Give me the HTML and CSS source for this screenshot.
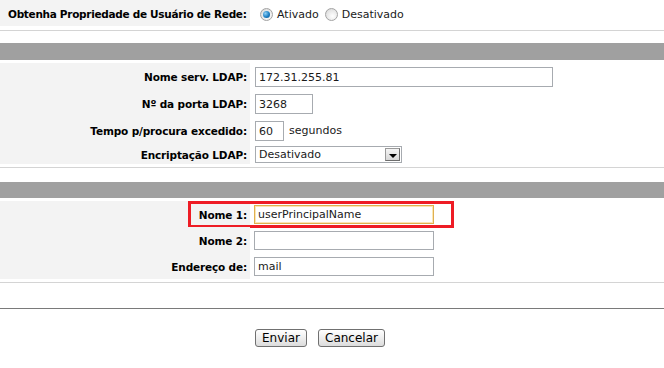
FILE: index.html
```html
<!DOCTYPE html>
<html lang="pt">
<head>
<meta charset="utf-8">
<title>LDAP</title>
<link rel="stylesheet" href="styles.css">
</head>
<body>
<div class="page">
  <div class="top">
    <div class="top-label">Obtenha Propriedade de Usuário de Rede:</div>
    <div class="top-field">
      <label class="radio"><span class="radio-dot checked"></span>Ativado</label>
      <label class="radio"><span class="radio-dot"></span>Desativado</label>
    </div>
  </div>

  <div class="bar bar-first"></div>

  <div class="section s2">
    <div class="row r27">
      <div class="lbl">Nome serv. LDAP:</div>
      <div class="fld"><input class="txt w298" type="text" value="172.31.255.81"></div>
    </div>
    <div class="row r27">
      <div class="lbl">Nº da porta LDAP:</div>
      <div class="fld"><input class="txt w58" type="text" value="3268"></div>
    </div>
    <div class="row r27">
      <div class="lbl">Tempo p/procura excedido:</div>
      <div class="fld"><input class="txt w29" type="text" value="60"><span class="unit">segundos</span></div>
    </div>
    <div class="row r20">
      <div class="lbl">Encriptação LDAP:</div>
      <div class="fld">
        <div class="select">
          <span class="select-text">Desativado</span>
          <span class="select-btn"><span class="arrow"></span></span>
        </div>
      </div>
    </div>
  </div>

  <div class="bar bar-second"></div>

  <div class="section s3">
    <div class="row r26 highlighted">
      <div class="lbl">Nome 1:</div>
      <div class="fld"><input class="txt w180 focus" type="text" value="userPrincipalName"></div>
      <div class="redbox"></div>
    </div>
    <div class="row r26">
      <div class="lbl">Nome 2:</div>
      <div class="fld"><input class="txt w180" type="text" value=""></div>
    </div>
    <div class="row r26">
      <div class="lbl">Endereço de:</div>
      <div class="fld"><input class="txt w180" type="text" value="mail"></div>
    </div>
  </div>

  <div class="footer">
    <div class="buttons">
      <button class="btn btn-send" type="button">Enviar</button>
      <button class="btn" type="button">Cancelar</button>
    </div>
  </div>
</div>
</body>
</html>
```

FILE: styles.css
```css
html, body {
  margin: 0;
  padding: 0;
  background: #ffffff;
}

body {
  font-family: "DejaVu Sans", Verdana, sans-serif;
  font-size: 11px;
  color: #000;
}

.page {
  width: 664px;
}

/* top row */
.top {
  display: flex;
  align-items: stretch;
  height: 26px;
  padding-bottom: 4px;
  border-bottom: 1px solid #d4d4d4;
}

.top-label {
  width: 242px;
  flex: none;
  padding-left: 8px;
  background: #f3f3f3;
  font-weight: bold;
  font-size: 10.5px;
  letter-spacing: -0.3px;
  white-space: nowrap;
  overflow: hidden;
  display: flex;
  align-items: center;
  padding-top: 2px;
  box-sizing: content-box;
}

.top-field {
  display: flex;
  align-items: center;
  padding-left: 10px;
  padding-top: 2px;
}

.radio {
  display: flex;
  align-items: center;
  margin-right: 6px;
  color: #1a1a1a;
}

.radio-dot {
  width: 11px;
  height: 11px;
  border-radius: 50%;
  border: 1px solid #a3a3a3;
  background: radial-gradient(circle at 60% 65%, #ffffff 0%, #e6e6e6 60%, #cfcfcf 100%);
  margin-right: 4px;
  position: relative;
  box-sizing: content-box;
}

.radio-dot.checked::after {
  content: "";
  position: absolute;
  left: 2px;
  top: 2px;
  width: 7px;
  height: 7px;
  border-radius: 50%;
  background: radial-gradient(circle at 35% 35%, #8fd0f5 0%, #1d7fc4 55%, #0b4f86 100%);
}

/* gray bars */
.bar {
  height: 17px;
  background-color: #a0a0a0;
  background-image: radial-gradient(#979797 0.6px, transparent 0.7px);
  background-size: 2px 2px;
}

.bar-first {
  margin-top: 12px;
}

.bar-second {
  margin-top: 14px;
  height: 16px;
}

/* sections */
.section {
  margin-top: 3px;
  padding-bottom: 3px;
  border-bottom: 1px solid #d4d4d4;
}

.row {
  display: flex;
  align-items: stretch;
  position: relative;
}

.r27 { height: 27px; }
.r26 { height: 26px; }
.r20 { height: 20px; }

.lbl {
  width: 247px;
  flex: none;
  padding-right: 3px;
  background: #f3f3f3;
  font-weight: bold;
  font-size: 10.5px;
  letter-spacing: -0.15px;
  white-space: nowrap;
  text-align: right;
  display: flex;
  align-items: center;
  justify-content: flex-end;
  padding-top: 1px;
}

.fld {
  display: flex;
  align-items: center;
  padding-left: 5px;
}

.s3 .fld {
  padding-left: 4px;
}

.txt {
  box-sizing: border-box;
  height: 19px;
  border: 1px solid #a7abb0;
  padding: 1px 3px 0 3px;
  margin: 0;
  font-family: "DejaVu Sans", Verdana, sans-serif;
  font-size: 11px;
  color: #1a1a1a;
  background: #fff;
  outline: none;
}

.r27 .txt { height: 20px; }

.txt.focus {
  border-color: #e0b050;
  box-shadow: inset 0 0 0 1px #fbe7b5;
}

.w298 { width: 298px; }
.w58 { width: 58px; }
.w29 { width: 29px; }
.w180 { width: 180px; }

.unit {
  margin-left: 5px;
  color: #1a1a1a;
}

/* select */
.select {
  box-sizing: border-box;
  width: 147px;
  height: 17px;
  border: 1px solid #a7abb0;
  display: flex;
  align-items: center;
  justify-content: space-between;
  background: #fff;
}

.select-text {
  padding-left: 3px;
  padding-top: 1px;
  color: #1a1a1a;
}

.select-btn {
  width: 15px;
  height: 13px;
  margin-right: 1px;
  box-sizing: border-box;
  border: 1px solid #6d6d6d;
  border-top-color: #9a9a9a;
  border-left-color: #9a9a9a;
  background: linear-gradient(#f4f4f4, #d8d8d8);
  display: flex;
  align-items: center;
  justify-content: center;
}

.arrow {
  width: 0;
  height: 0;
  border-left: 4px solid transparent;
  border-right: 4px solid transparent;
  border-top: 4px solid #000;
  margin-top: 3px;
}

/* highlight annotation */
.redbox {
  position: absolute;
  left: 188px;
  top: 0;
  width: 266px;
  height: 27px;
  box-sizing: border-box;
  border: 3px solid #ee1c25;
  pointer-events: none;
}

/* footer */
.footer {
  margin-top: 25px;
  border-top: 1px solid #7a7a7a;
  box-shadow: 0 1px 0 #c8c8c8;
  padding-top: 20px;
}

.buttons {
  display: flex;
  gap: 11px;
  padding-left: 255px;
}

.btn {
  box-sizing: border-box;
  height: 18px;
  padding: 0 6px;
  border: 1px solid #707070;
  border-radius: 3px;
  background: linear-gradient(#ffffff 0%, #f0f0f0 45%, #dcdcdc 100%);
  font-family: "DejaVu Sans", Tahoma, sans-serif;
  font-size: 12px;
  line-height: 14px;
  color: #000;
}

.btn-send {
  min-width: 52px;
}
```
